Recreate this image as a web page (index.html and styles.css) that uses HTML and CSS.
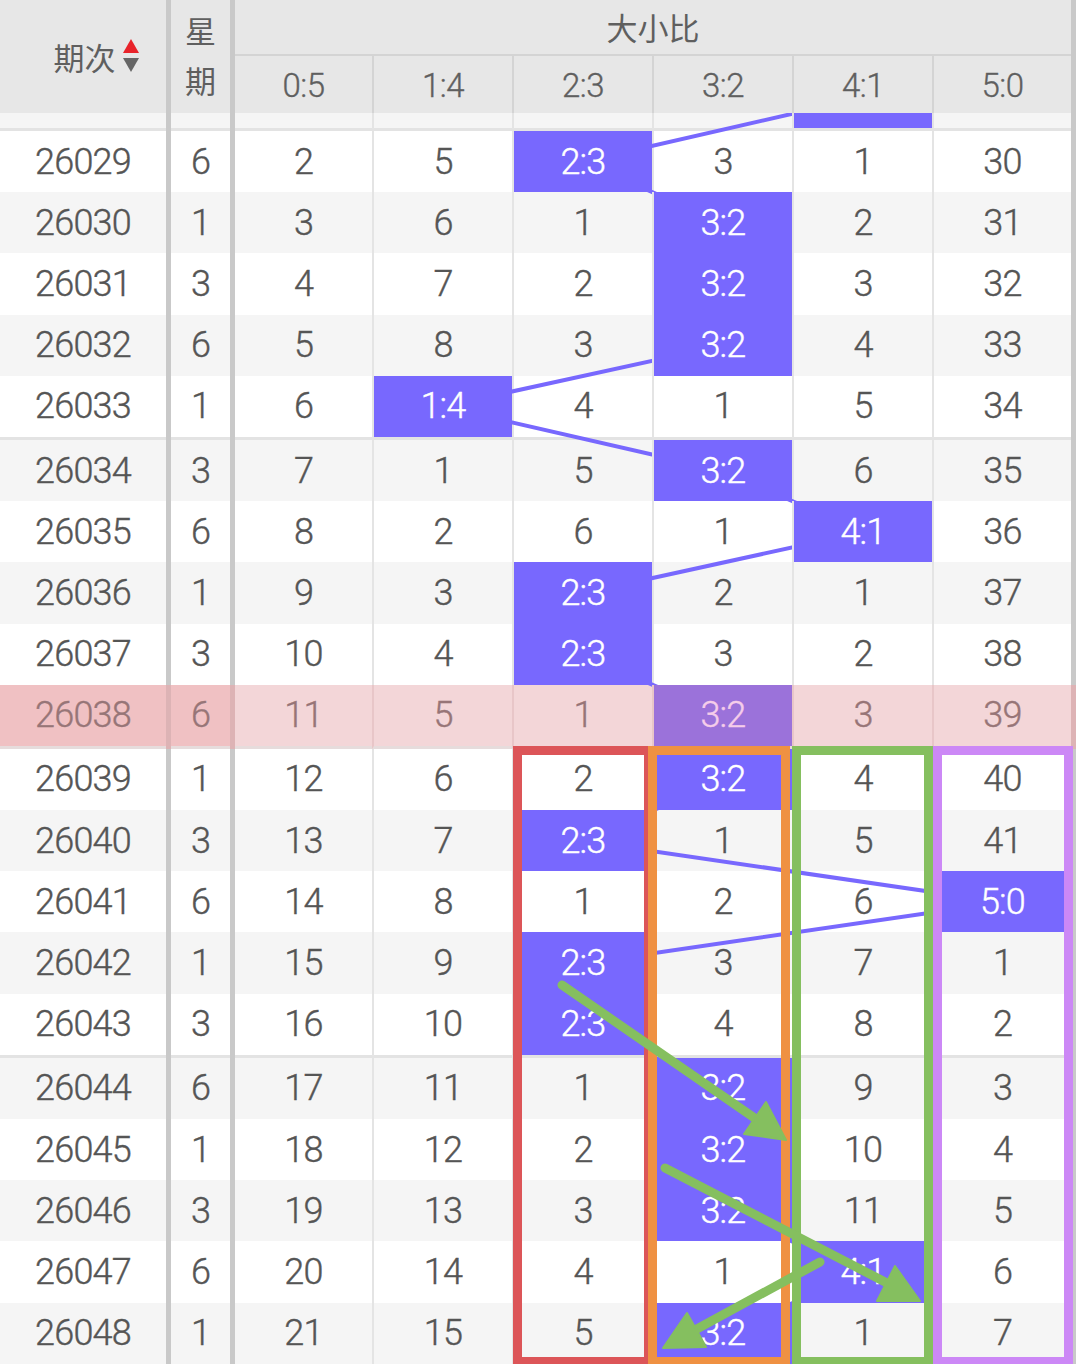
FILE: index.html
```html
<!DOCTYPE html>
<html lang="zh">
<head>
<meta charset="utf-8">
<title>大小比走势</title>
<link rel="stylesheet" href="styles.css">
</head>
<body>
<div class="table">
  <div class="thead">
    <div class="h-no"><span class="h-txt">期次</span><span class="sort"><i class="up"></i><i class="down"></i></span></div>
    <div class="vl"></div>
    <div class="h-wk">星期</div>
    <div class="vl"></div>
    <div class="h-group">
      <div class="h-title">大小比</div>
      <div class="h-subs">
        <div class="hs d0">0:5</div><div class="hs d1">1:4</div><div class="hs d2">2:3</div><div class="hs d3">3:2</div><div class="hs d4">4:1</div><div class="hs d5">5:0</div>
      </div>
    </div>
    <div class="vl"></div>
  </div>

  <div class="tbody">
    <div class="rows">
      <svg class="trend" width="1076" height="1320" viewBox="0 0 1076 1320">
        <polyline points="863,30.6 583,94.8 723,156 723,217.2 723,278.4 443,339.6 723,403.8 863,465 583,526.2 583,587.4 723,648.6 723,712.8 583,774 1002.5,835.2 583,896.4 583,957.6 723,1021.8 723,1083 723,1144.2 863,1205.4 723,1266.6" />
      </svg>

      <div class="row gray sep"><div class="c no"></div><div class="vl"></div><div class="c wk"></div><div class="vl"></div><div class="c d d0"></div><div class="c d d1"></div><div class="c d d2"></div><div class="c d d3"></div><div class="c d d4 hit"></div><div class="c d d5"></div><div class="vl"></div></div>
      <div class="row white"><div class="c no">26029</div><div class="vl"></div><div class="c wk">6</div><div class="vl"></div><div class="c d d0">2</div><div class="c d d1">5</div><div class="c d d2 hit">2:3</div><div class="c d d3">3</div><div class="c d d4">1</div><div class="c d d5">30</div><div class="vl"></div></div>
      <div class="row gray"><div class="c no">26030</div><div class="vl"></div><div class="c wk">1</div><div class="vl"></div><div class="c d d0">3</div><div class="c d d1">6</div><div class="c d d2">1</div><div class="c d d3 hit">3:2</div><div class="c d d4">2</div><div class="c d d5">31</div><div class="vl"></div></div>
      <div class="row white"><div class="c no">26031</div><div class="vl"></div><div class="c wk">3</div><div class="vl"></div><div class="c d d0">4</div><div class="c d d1">7</div><div class="c d d2">2</div><div class="c d d3 hit">3:2</div><div class="c d d4">3</div><div class="c d d5">32</div><div class="vl"></div></div>
      <div class="row gray"><div class="c no">26032</div><div class="vl"></div><div class="c wk">6</div><div class="vl"></div><div class="c d d0">5</div><div class="c d d1">8</div><div class="c d d2">3</div><div class="c d d3 hit">3:2</div><div class="c d d4">4</div><div class="c d d5">33</div><div class="vl"></div></div>
      <div class="row white sep"><div class="c no">26033</div><div class="vl"></div><div class="c wk">1</div><div class="vl"></div><div class="c d d0">6</div><div class="c d d1 hit">1:4</div><div class="c d d2">4</div><div class="c d d3">1</div><div class="c d d4">5</div><div class="c d d5">34</div><div class="vl"></div></div>
      <div class="row gray"><div class="c no">26034</div><div class="vl"></div><div class="c wk">3</div><div class="vl"></div><div class="c d d0">7</div><div class="c d d1">1</div><div class="c d d2">5</div><div class="c d d3 hit">3:2</div><div class="c d d4">6</div><div class="c d d5">35</div><div class="vl"></div></div>
      <div class="row white"><div class="c no">26035</div><div class="vl"></div><div class="c wk">6</div><div class="vl"></div><div class="c d d0">8</div><div class="c d d1">2</div><div class="c d d2">6</div><div class="c d d3">1</div><div class="c d d4 hit">4:1</div><div class="c d d5">36</div><div class="vl"></div></div>
      <div class="row gray"><div class="c no">26036</div><div class="vl"></div><div class="c wk">1</div><div class="vl"></div><div class="c d d0">9</div><div class="c d d1">3</div><div class="c d d2 hit">2:3</div><div class="c d d3">2</div><div class="c d d4">1</div><div class="c d d5">37</div><div class="vl"></div></div>
      <div class="row white"><div class="c no">26037</div><div class="vl"></div><div class="c wk">3</div><div class="vl"></div><div class="c d d0">10</div><div class="c d d1">4</div><div class="c d d2 hit">2:3</div><div class="c d d3">3</div><div class="c d d4">2</div><div class="c d d5">38</div><div class="vl"></div></div>
      <div class="row cur sep"><div class="c no">26038</div><div class="vl"></div><div class="c wk">6</div><div class="vl"></div><div class="c d d0">11</div><div class="c d d1">5</div><div class="c d d2">1</div><div class="c d d3 hit">3:2</div><div class="c d d4">3</div><div class="c d d5">39</div><div class="vl"></div></div>
      <div class="row white"><div class="c no">26039</div><div class="vl"></div><div class="c wk">1</div><div class="vl"></div><div class="c d d0">12</div><div class="c d d1">6</div><div class="c d d2">2</div><div class="c d d3 hit">3:2</div><div class="c d d4">4</div><div class="c d d5">40</div><div class="vl"></div></div>
      <div class="row gray"><div class="c no">26040</div><div class="vl"></div><div class="c wk">3</div><div class="vl"></div><div class="c d d0">13</div><div class="c d d1">7</div><div class="c d d2 hit">2:3</div><div class="c d d3">1</div><div class="c d d4">5</div><div class="c d d5">41</div><div class="vl"></div></div>
      <div class="row white"><div class="c no">26041</div><div class="vl"></div><div class="c wk">6</div><div class="vl"></div><div class="c d d0">14</div><div class="c d d1">8</div><div class="c d d2">1</div><div class="c d d3">2</div><div class="c d d4">6</div><div class="c d d5 hit">5:0</div><div class="vl"></div></div>
      <div class="row gray"><div class="c no">26042</div><div class="vl"></div><div class="c wk">1</div><div class="vl"></div><div class="c d d0">15</div><div class="c d d1">9</div><div class="c d d2 hit">2:3</div><div class="c d d3">3</div><div class="c d d4">7</div><div class="c d d5">1</div><div class="vl"></div></div>
      <div class="row white sep"><div class="c no">26043</div><div class="vl"></div><div class="c wk">3</div><div class="vl"></div><div class="c d d0">16</div><div class="c d d1">10</div><div class="c d d2 hit">2:3</div><div class="c d d3">4</div><div class="c d d4">8</div><div class="c d d5">2</div><div class="vl"></div></div>
      <div class="row gray"><div class="c no">26044</div><div class="vl"></div><div class="c wk">6</div><div class="vl"></div><div class="c d d0">17</div><div class="c d d1">11</div><div class="c d d2">1</div><div class="c d d3 hit">3:2</div><div class="c d d4">9</div><div class="c d d5">3</div><div class="vl"></div></div>
      <div class="row white"><div class="c no">26045</div><div class="vl"></div><div class="c wk">1</div><div class="vl"></div><div class="c d d0">18</div><div class="c d d1">12</div><div class="c d d2">2</div><div class="c d d3 hit">3:2</div><div class="c d d4">10</div><div class="c d d5">4</div><div class="vl"></div></div>
      <div class="row gray"><div class="c no">26046</div><div class="vl"></div><div class="c wk">3</div><div class="vl"></div><div class="c d d0">19</div><div class="c d d1">13</div><div class="c d d2">3</div><div class="c d d3 hit">3:2</div><div class="c d d4">11</div><div class="c d d5">5</div><div class="vl"></div></div>
      <div class="row white"><div class="c no">26047</div><div class="vl"></div><div class="c wk">6</div><div class="vl"></div><div class="c d d0">20</div><div class="c d d1">14</div><div class="c d d2">4</div><div class="c d d3">1</div><div class="c d d4 hit">4:1</div><div class="c d d5">6</div><div class="vl"></div></div>
      <div class="row gray"><div class="c no">26048</div><div class="vl"></div><div class="c wk">1</div><div class="vl"></div><div class="c d d0">21</div><div class="c d d1">15</div><div class="c d d2">5</div><div class="c d d3 hit">3:2</div><div class="c d d4">1</div><div class="c d d5">7</div><div class="vl"></div></div>
    </div>
  </div>

  <div class="marks">
    <div class="box box-red"></div>
    <div class="box box-orange"></div>
    <div class="box box-green"></div>
    <div class="box box-purple"></div>
    <svg class="arrows" width="1076" height="1364" viewBox="0 0 1076 1364">
      <g class="arrow">
        <line x1="562" y1="985" x2="756" y2="1119" />
        <polygon points="786,1140 744,1134 766,1102" />
      </g>
      <g class="arrow">
        <line x1="665" y1="1168" x2="887" y2="1283" />
        <polygon points="920,1301 877,1301 895,1266" />
      </g>
      <g class="arrow">
        <line x1="820" y1="1262" x2="695" y2="1330" />
        <polygon points="663,1348 706,1347 687,1313" />
      </g>
    </svg>
  </div>
</div>
</body>
</html>
```

FILE: styles.css
```css
html, body {
  margin: 0;
  padding: 0;
  overflow: hidden;
  background: #ffffff;
}

.table {
  position: relative;
  width: 1076px;
  height: 1364px;
  font-family: Roboto, "Noto Sans", "Noto Sans CJK SC", sans-serif;
  font-weight: 300;
  color: #555555;
}

/* ---------- header ---------- */
.thead {
  display: flex;
  height: 113px;
  background: #e7e7e7;
  color: #5f5f5f;
}

.vl {
  width: 5px;
  flex: none;
  background: #c9c9c9;
}

.h-no {
  width: 166px;
  flex: none;
  display: flex;
  align-items: center;
  justify-content: center;
  box-sizing: border-box;
  padding-left: 26px;
  gap: 7px;
}

.h-txt,
.h-wk,
.h-title {
  font-family: "Noto Sans CJK SC", sans-serif;
  font-weight: 400;
  font-size: 31px;
}

.sort {
  display: flex;
  flex-direction: column;
  gap: 5px;
  margin-top: -2px;
}

.sort i {
  display: block;
  width: 0;
  height: 0;
  border-left: 8px solid transparent;
  border-right: 8px solid transparent;
}

.sort .up {
  border-bottom: 14px solid #e8232a;
}

.sort .down {
  border-top: 14px solid #666666;
}

.h-wk {
  width: 59px;
  flex: none;
  display: flex;
  align-items: center;
  justify-content: center;
  text-align: center;
  line-height: 50px;
  box-sizing: border-box;
  padding: 0 12px 4px;
}

.h-group {
  width: 836px;
  flex: none;
  display: flex;
  flex-direction: column;
}

.h-title {
  height: 56px;
  border-bottom: 2px solid #d4d4d4;
  display: flex;
  align-items: center;
  justify-content: center;
  padding-bottom: 2px;
  box-sizing: border-box;
}

.h-subs {
  display: flex;
  height: 57px;
}

.hs {
  display: flex;
  align-items: center;
  justify-content: center;
  font-size: 33px;
  letter-spacing: -0.5px;
  box-sizing: border-box;
  border-left: 2px solid #d4d4d4;
  padding-top: 2px;
  -webkit-text-stroke: 0.35px currentColor;
}

/* column widths (shared by header and body) */
.d0 { width: 137px; border-left: none; }
.d1, .d2, .d3, .d4 { width: 140px; }
.d5 { width: 139px; }

/* ---------- body ---------- */
.tbody {
  position: relative;
  height: 1251px;
  overflow: hidden;
}

.rows {
  position: relative;
  margin-top: -46.2px;
}

.trend {
  position: absolute;
  top: 0;
  left: 0;
  z-index: 1;
  pointer-events: none;
}

.trend polyline {
  fill: none;
  stroke: #7868fe;
  stroke-width: 4;
  stroke-linejoin: round;
}

.row {
  display: flex;
}

.row.white { background: #ffffff; }
.row.gray { background: #f5f5f5; }
.row.cur { background: #f3d6d8; color: #977577; }

.c {
  height: 61.2px;
  display: flex;
  align-items: center;
  justify-content: center;
  font-size: 36px;
  letter-spacing: -0.8px;
  line-height: 1;
  flex: none;
  box-sizing: content-box;
  -webkit-text-stroke: 0.4px currentColor;
}

.c.no { width: 166px; }
.c.wk { width: 59px; }

.c.d {
  border-left: 2px solid #e4e4e4;
}

.c.d.d0 { border-left: none; width: 137px; }
.c.d1, .c.d2, .c.d3, .c.d4 { width: 138px; }
.c.d5 { width: 137px; }

.row.sep .c {
  border-bottom: 3px solid #e3e3e3;
}

.c.hit {
  position: relative;
  z-index: 2;
  background: #7868fe;
  background-clip: padding-box;
  color: #ffffff;
}

.row.cur .c.no,
.row.cur .c.wk {
  background: #f0c1c3;
}

.row.cur .vl {
  background: #ddb3b5;
}

.row.cur .c.d {
  border-left-color: #e8c6c8;
}

.row.cur.sep .c {
  border-bottom-color: #e6dcdc;
}

.row.cur .c.hit {
  background: #9b72da;
  background-clip: padding-box;
  color: #f5cdea;
}

/* ---------- annotations ---------- */
.marks {
  position: absolute;
  top: 0;
  left: 0;
  width: 1076px;
  height: 1364px;
  z-index: 3;
  pointer-events: none;
}

.box {
  position: absolute;
  top: 746px;
  height: 620px;
  box-sizing: border-box;
  border: 9px solid;
}

.box-red { left: 513px; width: 140px; border-color: #dc5558; }
.box-orange { left: 648px; width: 142px; border-color: #ef9142; }
.box-green { left: 792px; width: 141px; border-color: #85bf5f; }
.box-purple { left: 933px; width: 140px; border-color: #cc88f6; }

.arrows {
  position: absolute;
  top: 0;
  left: 0;
}

.arrow line {
  stroke: #85bf5f;
  stroke-width: 9;
  stroke-linecap: round;
}

.arrow polygon {
  fill: #85bf5f;
  stroke: #85bf5f;
  stroke-width: 2;
  stroke-linejoin: round;
}
```
